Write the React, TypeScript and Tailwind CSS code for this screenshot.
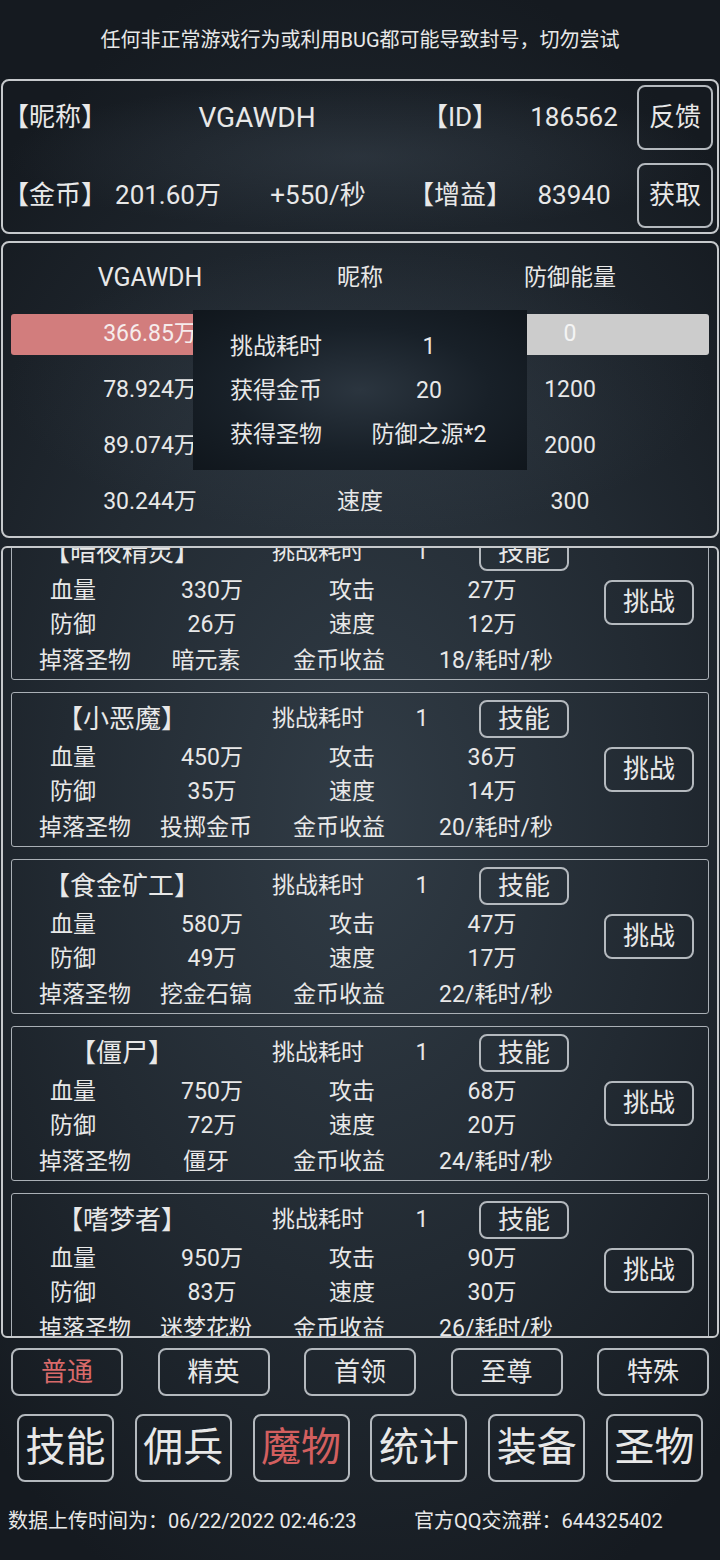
import { useLayoutEffect, useRef } from 'react'

const monsters = [
  { name: '暗夜精灵', hp: '330万', atk: '27万', def: '26万', spd: '12万', drop: '暗元素', gold: '18/耗时/秒' },
  { name: '小恶魔', hp: '450万', atk: '36万', def: '35万', spd: '14万', drop: '投掷金币', gold: '20/耗时/秒' },
  { name: '食金矿工', hp: '580万', atk: '47万', def: '49万', spd: '17万', drop: '挖金石镐', gold: '22/耗时/秒' },
  { name: '僵尸', hp: '750万', atk: '68万', def: '72万', spd: '20万', drop: '僵牙', gold: '24/耗时/秒' },
  { name: '嗜梦者', hp: '950万', atk: '90万', def: '83万', spd: '30万', drop: '迷梦花粉', gold: '26/耗时/秒' },
]

const levels = ['普通', '精英', '首领', '至尊', '特殊']
const menus = ['技能', '佣兵', '魔物', '统计', '装备', '圣物']

const MonsterCard = ({ m }: { m: (typeof monsters)[number] }) => (
  <div className="flex h-[155px] shrink-0 items-center rounded-[3px] border-[1.5px] border-[#aab0b6]">
    <div className="flex w-[558px] flex-col pt-[5px]">
      {/* name row */}
      <div className="flex h-[40px] items-center">
        <div className="w-[220px] text-center text-[26px]">【{m.name}】</div>
        <div className="w-[172px] text-center text-[23px]">挑战耗时</div>
        <div className="w-[36px] text-center text-[23px]">1</div>
        <button className="ml-[39px] flex h-[38px] w-[90px] items-center justify-center rounded-[8px] border-2 border-[#b4b9be] text-[26px]">
          技能
        </button>
      </div>
      <div className="mt-[2px] flex h-[34px] items-center text-[23px]">
        <div className="w-[122px] text-center">血量</div>
        <div className="w-[156px] text-center">{m.hp}</div>
        <div className="w-[124px] text-center">攻击</div>
        <div className="w-[156px] text-center">{m.atk}</div>
      </div>
      <div className="flex h-[34px] items-center text-[23px]">
        <div className="w-[122px] text-center">防御</div>
        <div className="w-[156px] text-center">{m.def}</div>
        <div className="w-[124px] text-center">速度</div>
        <div className="w-[156px] text-center">{m.spd}</div>
      </div>
      <div className="mt-[2px] flex h-[34px] items-center text-[23px] whitespace-nowrap">
        <div className="w-[146px] text-center">掉落圣物</div>
        <div className="w-[96px] text-center">{m.drop}</div>
        <div className="w-[170px] text-center">金币收益</div>
        <div className="w-[144px] text-center">{m.gold}</div>
      </div>
    </div>
    <button className="ml-[34px] flex h-[45px] w-[90px] items-center justify-center rounded-[8px] border-2 border-[#b4b9be] text-[26px]">
      挑战
    </button>
  </div>
)

export default function App() {
  const listRef = useRef<HTMLDivElement>(null)

  useLayoutEffect(() => {
    if (listRef.current) listRef.current.scrollTop = 23
  }, [])

  return (
    <div className="flex h-[1560px] w-[720px] flex-col overflow-hidden bg-[radial-gradient(ellipse_75%_55%_at_50%_52%,#313c46_0%,#222a32_55%,#151a20_100%)] font-['Roboto','Noto_Sans_CJK_SC',sans-serif] text-[#e8e8e8]">
      {/* notice */}
      <div className="flex h-[79px] items-center justify-center text-[20px]">
        任何非正常游戏行为或利用BUG都可能导致封号，切勿尝试
      </div>

      {/* player info */}
      <div className="mx-[1px] flex h-[155px] flex-col gap-[13px] rounded-[8px] border-2 border-[#c6c9cc] bg-[radial-gradient(ellipse_at_center,rgba(70,82,94,0.35),transparent_70%)] py-[4px] text-[26px] whitespace-nowrap">
        <div className="flex h-[65px] items-center">
          <div className="w-[104px] text-center">【昵称】</div>
          <div className="w-[300px] text-center text-[28px]">VGAWDH</div>
          <div className="w-[106px] text-center">【ID】</div>
          <div className="w-[122px] text-center">186562</div>
          <button className="ml-[2px] flex h-[65px] w-[76px] items-center justify-center rounded-[8px] border-2 border-[#b4b9be]">
            反馈
          </button>
        </div>
        <div className="flex h-[65px] items-center">
          <div className="w-[104px] text-center">【金币】</div>
          <div className="w-[122px] text-center">201.60万</div>
          <div className="w-[178px] text-center">+550/秒</div>
          <div className="w-[106px] text-center">【增益】</div>
          <div className="w-[122px] text-center">83940</div>
          <button className="ml-[2px] flex h-[65px] w-[76px] items-center justify-center rounded-[8px] border-2 border-[#b4b9be]">
            获取
          </button>
        </div>
      </div>

      {/* battle panel */}
      <div className="relative mx-[1px] mt-[7px] flex flex-col rounded-[8px] border-2 border-[#c6c9cc] bg-[radial-gradient(ellipse_at_center,rgba(70,82,94,0.3),transparent_70%)] px-[8px] pt-[7px] pb-[6px] text-[23px]">
        <div className="flex h-[56px] items-center">
          <div className="w-[278px] text-center text-[25px]">VGAWDH</div>
          <div className="w-[142px] text-center">昵称</div>
          <div className="w-[278px] text-center">防御能量</div>
        </div>
        <div className="flex h-[56px] items-center">
          <div className="flex h-[41px] w-[278px] items-center justify-center rounded-[3px] bg-[#d27d7d] text-[#f6ecec]">366.85万</div>
          <div className="w-[142px]" />
          <div className="flex h-[41px] w-[278px] items-center justify-center rounded-[3px] bg-[#cccccc] text-[#f4f4f4]">0</div>
        </div>
        <div className="flex h-[56px] items-center">
          <div className="w-[278px] text-center">78.924万</div>
          <div className="w-[142px]" />
          <div className="w-[278px] text-center">1200</div>
        </div>
        <div className="flex h-[56px] items-center">
          <div className="w-[278px] text-center">89.074万</div>
          <div className="w-[142px]" />
          <div className="w-[278px] text-center">2000</div>
        </div>
        <div className="flex h-[56px] items-center">
          <div className="w-[278px] text-center">30.244万</div>
          <div className="w-[142px] text-center">速度</div>
          <div className="w-[278px] text-center">300</div>
        </div>

        {/* reward popup */}
        <div className="absolute top-[67px] left-[190px] grid h-[160px] w-[334px] grid-cols-[166px_140px] content-start bg-[radial-gradient(ellipse_at_center,#2b353f_0%,#182028_55%,#10161c_100%)] pt-[15px] text-[23px]">
          <div className="flex h-[44px] items-center justify-center">挑战耗时</div>
          <div className="flex h-[44px] items-center justify-center">1</div>
          <div className="flex h-[44px] items-center justify-center">获得金币</div>
          <div className="flex h-[44px] items-center justify-center">20</div>
          <div className="flex h-[44px] items-center justify-center">获得圣物</div>
          <div className="flex h-[44px] items-center justify-center whitespace-nowrap">防御之源*2</div>
        </div>
      </div>

      {/* monster list */}
      <div
        ref={listRef}
        className="mx-[1px] mt-[8px] flex h-[792px] shrink-0 flex-col gap-[12px] overflow-hidden rounded-[6px] border-2 border-[#c6c9cc] px-[8px] pb-[12px]"
      >
        {monsters.map((m) => (
          <MonsterCard key={m.name} m={m} />
        ))}
      </div>

      {/* level tabs */}
      <div className="mt-[10px] flex justify-between px-[11px]">
        {levels.map((l, i) => (
          <button
            key={l}
            className={`flex h-[48px] w-[112px] items-center justify-center rounded-[8px] border-2 border-[#b4b9be] text-[26px] ${i === 0 ? 'text-[#d86a6a]' : ''}`}
          >
            {l}
          </button>
        ))}
      </div>

      {/* main menu */}
      <div className="mt-[18px] flex justify-between px-[17px]">
        {menus.map((l, i) => (
          <button
            key={l}
            className={`flex h-[68px] w-[97px] items-center justify-center rounded-[8px] border-2 border-[#b4b9be] text-[40px] ${i === 2 ? 'text-[#d35f5f]' : ''}`}
          >
            {l}
          </button>
        ))}
      </div>

      {/* footer */}
      <div className="mt-[27px] flex h-[24px] items-center px-[8px] text-[20px] whitespace-nowrap">
        <div className="w-[406px]">数据上传时间为：06/22/2022 02:46:23</div>
        <div>官方QQ交流群：644325402</div>
      </div>
    </div>
  )
}
